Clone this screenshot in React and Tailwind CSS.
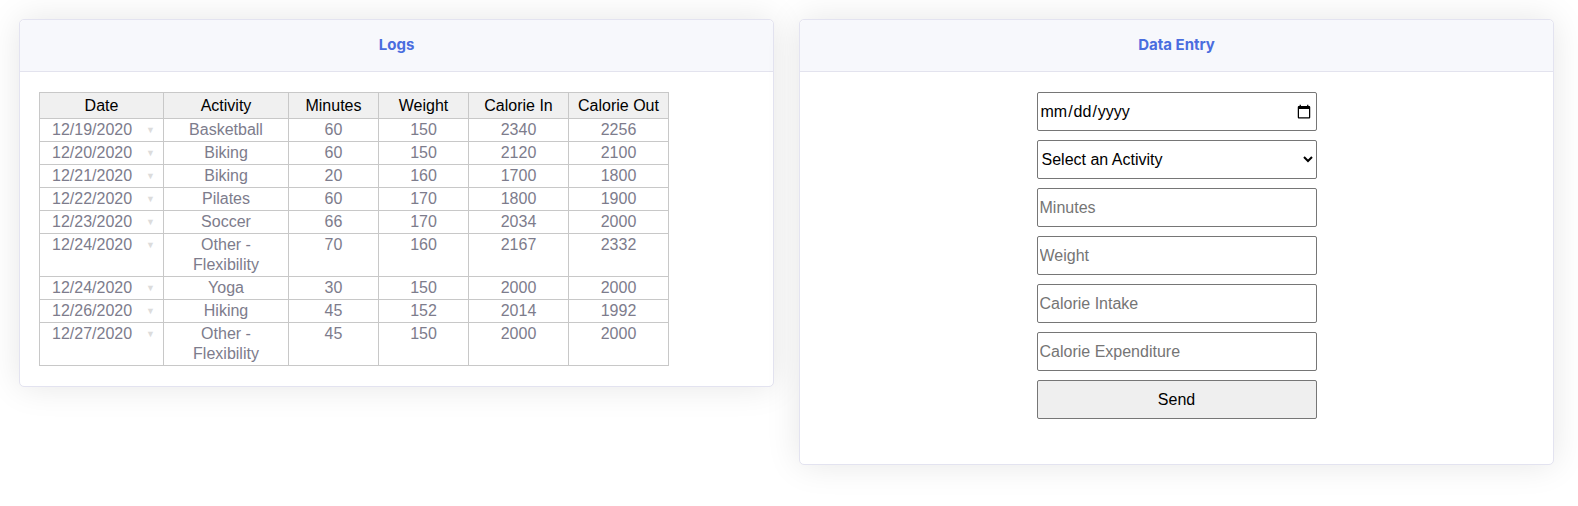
import React from 'react';

const logs = [
  { date: '12/19/2020', activity: 'Basketball', minutes: 60, weight: 150, calIn: 2340, calOut: 2256 },
  { date: '12/20/2020', activity: 'Biking', minutes: 60, weight: 150, calIn: 2120, calOut: 2100 },
  { date: '12/21/2020', activity: 'Biking', minutes: 20, weight: 160, calIn: 1700, calOut: 1800 },
  { date: '12/22/2020', activity: 'Pilates', minutes: 60, weight: 170, calIn: 1800, calOut: 1900 },
  { date: '12/23/2020', activity: 'Soccer', minutes: 66, weight: 170, calIn: 2034, calOut: 2000 },
  { date: '12/24/2020', activity: 'Other - Flexibility', minutes: 70, weight: 160, calIn: 2167, calOut: 2332 },
  { date: '12/24/2020', activity: 'Yoga', minutes: 30, weight: 150, calIn: 2000, calOut: 2000 },
  { date: '12/26/2020', activity: 'Hiking', minutes: 45, weight: 152, calIn: 2014, calOut: 1992 },
  { date: '12/27/2020', activity: 'Other - Flexibility', minutes: 45, weight: 150, calIn: 2000, calOut: 2000 },
];

function Card({ title, children, bodyClass }) {
  return (
    <div className="w-[755px] shrink-0 rounded-[5px] border border-[#e3e3f0] bg-white shadow-[0_0_34px_rgba(0,0,0,0.1)]">
      <div className="flex h-[52px] items-center justify-center rounded-t-[5px] border-b border-[#e3e3ee] bg-[#f7f8fc]">
        <h2 className="font-['Inter',sans-serif] text-[15px] font-bold text-[#4a6ddf]">{title}</h2>
      </div>
      <div className={bodyClass}>{children}</div>
    </div>
  );
}

function Logs() {
  const th = 'border border-[#c8c8c8] bg-[#f0f0f0] h-[26px] leading-[20px] font-normal text-black';
  const td = 'border border-[#c8c8c8] align-top leading-[20px] py-[1px] text-[#7d7c8c]';
  return (
    <table className="w-[629px] table-fixed border-collapse text-center text-[16px]">
      <colgroup>
        <col className="w-[124px]" />
        <col className="w-[125px]" />
        <col className="w-[90px]" />
        <col className="w-[90px]" />
        <col className="w-[100px]" />
        <col className="w-[100px]" />
      </colgroup>
      <thead>
        <tr>
          <th className={th}>Date</th>
          <th className={th}>Activity</th>
          <th className={th}>Minutes</th>
          <th className={th}>Weight</th>
          <th className={th}>Calorie In</th>
          <th className={th}>Calorie Out</th>
        </tr>
      </thead>
      <tbody>
        {logs.map((row, i) => (
          <tr key={i}>
            <td className={td}>
              <div className="flex items-center pl-[12px] pr-[8px]">
                <span>{row.date}</span>
                <span className="ml-auto text-[9px] text-[#dcdcdc]">▼</span>
              </div>
            </td>
            <td className={td + ' px-[8px]'}>
              {row.activity === 'Other - Flexibility' ? (
                <>Other -<br />Flexibility</>
              ) : (
                row.activity
              )}
            </td>
            <td className={td}>{row.minutes}</td>
            <td className={td}>{row.weight}</td>
            <td className={td}>{row.calIn}</td>
            <td className={td}>{row.calOut}</td>
          </tr>
        ))}
      </tbody>
    </table>
  );
}

function DataEntry() {
  const base =
    'box-border h-[39px] w-[280px] rounded-[2px] border border-[#767676] text-[16px] text-black placeholder:text-[#757575]';
  const field = base + ' bg-white px-[2px]';
  return (
    <form className="flex flex-col items-center gap-[9px]" onSubmit={(e) => e.preventDefault()}>
      <input type="date" className={field} />
      <select className={base + ' bg-white px-0'} defaultValue="">
        <option value="">Select an Activity</option>
        <option>Basketball</option>
        <option>Biking</option>
        <option>Pilates</option>
        <option>Soccer</option>
        <option>Yoga</option>
        <option>Hiking</option>
        <option>Other - Flexibility</option>
      </select>
      <input type="text" placeholder="Minutes" className={field} />
      <input type="text" placeholder="Weight" className={field} />
      <input type="text" placeholder="Calorie Intake" className={field} />
      <input type="text" placeholder="Calorie Expenditure" className={field} />
      <button type="submit" className={base + ' bg-[#efefef] text-center'}>
        Send
      </button>
    </form>
  );
}

export default function App() {
  return (
    <div className="min-h-[506px] bg-white font-['Liberation_Sans',Arial,sans-serif]">
      <div className="flex items-start gap-[25px] pl-[19px] pr-[24px] pt-[19px]">
        <Card title="Logs" bodyClass="pl-[19px] pr-[20px] pt-[20px] pb-[20px]">
          <Logs />
        </Card>
        <Card title="Data Entry" bodyClass="pt-[20px] pb-[45px]">
          <DataEntry />
        </Card>
      </div>
    </div>
  );
}
